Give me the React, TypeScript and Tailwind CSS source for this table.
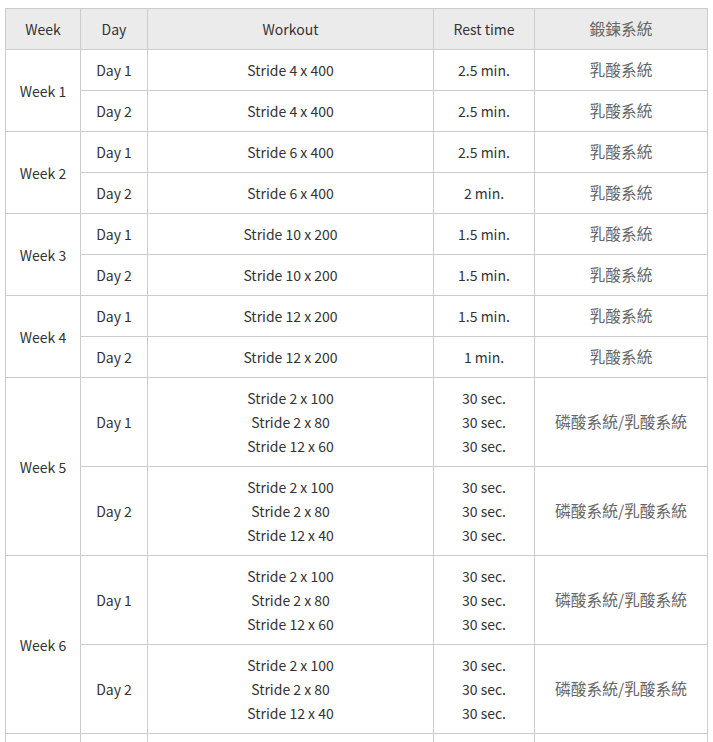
import React from 'react';

type DayRow = { day: string; workout: string[]; rest: string[]; system: string };
type WeekRow = { week: string; days: DayRow[] };

const weeks: WeekRow[] = [
    { week: 'Week 1', days: [
        { day: 'Day 1', workout: ['Stride 4 x 400'], rest: ['2.5 min.'], system: '乳酸系統' },
        { day: 'Day 2', workout: ['Stride 4 x 400'], rest: ['2.5 min.'], system: '乳酸系統' },
    ] },
    { week: 'Week 2', days: [
        { day: 'Day 1', workout: ['Stride 6 x 400'], rest: ['2.5 min.'], system: '乳酸系統' },
        { day: 'Day 2', workout: ['Stride 6 x 400'], rest: ['2 min.'], system: '乳酸系統' },
    ] },
    { week: 'Week 3', days: [
        { day: 'Day 1', workout: ['Stride 10 x 200'], rest: ['1.5 min.'], system: '乳酸系統' },
        { day: 'Day 2', workout: ['Stride 10 x 200'], rest: ['1.5 min.'], system: '乳酸系統' },
    ] },
    { week: 'Week 4', days: [
        { day: 'Day 1', workout: ['Stride 12 x 200'], rest: ['1.5 min.'], system: '乳酸系統' },
        { day: 'Day 2', workout: ['Stride 12 x 200'], rest: ['1 min.'], system: '乳酸系統' },
    ] },
    { week: 'Week 5', days: [
        { day: 'Day 1', workout: ['Stride 2 x 100', 'Stride 2 x 80', 'Stride 12 x 60'], rest: ['30 sec.', '30 sec.', '30 sec.'], system: '磷酸系統/乳酸系統' },
        { day: 'Day 2', workout: ['Stride 2 x 100', 'Stride 2 x 80', 'Stride 12 x 40'], rest: ['30 sec.', '30 sec.', '30 sec.'], system: '磷酸系統/乳酸系統' },
    ] },
    { week: 'Week 6', days: [
        { day: 'Day 1', workout: ['Stride 2 x 100', 'Stride 2 x 80', 'Stride 12 x 60'], rest: ['30 sec.', '30 sec.', '30 sec.'], system: '磷酸系統/乳酸系統' },
        { day: 'Day 2', workout: ['Stride 2 x 100', 'Stride 2 x 80', 'Stride 12 x 40'], rest: ['30 sec.', '30 sec.', '30 sec.'], system: '磷酸系統/乳酸系統' },
    ] },
    { week: 'Week 7', days: [
        { day: 'Day 1', workout: ['Stride 2 x 100', 'Stride 2 x 80', 'Stride 12 x 60'], rest: ['30 sec.', '30 sec.', '30 sec.'], system: '磷酸系統/乳酸系統' },
        { day: 'Day 2', workout: ['Stride 2 x 100', 'Stride 2 x 80', 'Stride 12 x 40'], rest: ['30 sec.', '30 sec.', '30 sec.'], system: '磷酸系統/乳酸系統' },
    ] },
];

const cell = 'border border-[#cccccc] px-2 py-2 text-center align-middle';
// CJK glyphs in the original render a bit wider and lighter than the latin text
const cjk = 'text-[15.75px] text-[#666666]';

export default function App() {
    return (
        <div className="h-[742px] overflow-hidden bg-white pt-2 pl-[5px]" style={{ fontFamily: '"Noto Sans CJK TC", "Noto Sans", sans-serif' }}>
            <table className="w-[702px] table-fixed border-collapse text-[14px] leading-6 text-[#333333]">
                <colgroup>
                    <col className="w-[75px]" />
                    <col className="w-[67px]" />
                    <col className="w-[286px]" />
                    <col className="w-[101px]" />
                    <col className="w-[173px]" />
                </colgroup>
                <thead>
                    <tr className="bg-[#ebebeb]">
                        <th className={`${cell} font-normal`}>Week</th>
                        <th className={`${cell} font-normal`}>Day</th>
                        <th className={`${cell} font-normal`}>Workout</th>
                        <th className={`${cell} font-normal`}>Rest time</th>
                        <th className={`${cell} font-normal ${cjk}`}>鍛鍊系統</th>
                    </tr>
                </thead>
                <tbody>
                    {weeks.map((w) =>
                        w.days.map((d, i) => (
                            <tr key={w.week + d.day}>
                                {i === 0 && (
                                    <td className={cell} rowSpan={w.days.length}>{w.week}</td>
                                )}
                                <td className={cell}>{d.day}</td>
                                <td className={cell}>
                                    {d.workout.map((line, k) => (
                                        <div key={k}>{line}</div>
                                    ))}
                                </td>
                                <td className={cell}>
                                    {d.rest.map((line, k) => (
                                        <div key={k}>{line}</div>
                                    ))}
                                </td>
                                <td className={`${cell} ${cjk}`}>{d.system}</td>
                            </tr>
                        ))
                    )}
                </tbody>
            </table>
        </div>
    );
}
